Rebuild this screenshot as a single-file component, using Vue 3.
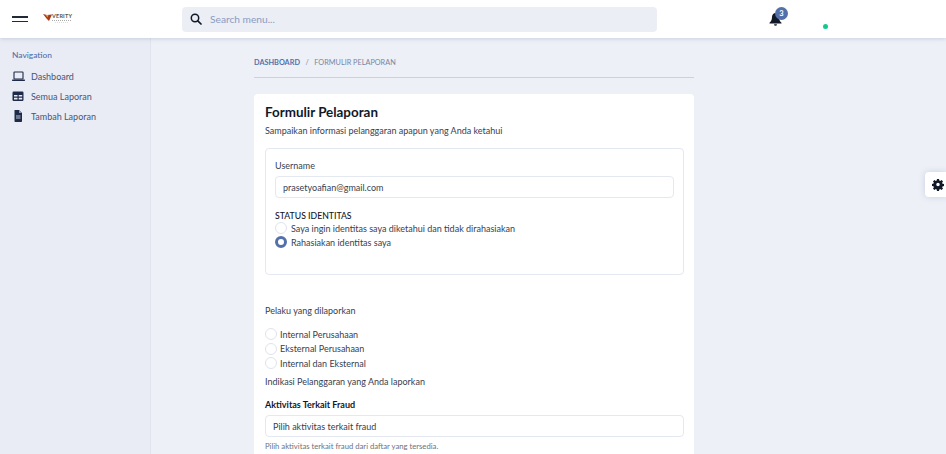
<script setup>
const nav = [
  { label: 'Dashboard', icon: 'laptop' },
  { label: 'Semua Laporan', icon: 'table' },
  { label: 'Tambah Laporan', icon: 'file' },
]
const identity = [
  { label: 'Saya ingin identitas saya diketahui dan tidak dirahasiakan', checked: false },
  { label: 'Rahasiakan identitas saya', checked: true },
]
const actors = ['Internal Perusahaan', 'Eksternal Perusahaan', 'Internal dan Eksternal']
</script>

<template>
  <div class="app">
    <header class="topbar">
      <div class="brand">
        <div class="burger"><span></span><span></span></div>
        <div class="logo">
          <svg width="9" height="8" viewBox="0 0 9 8"><path d="M0 1l4 1 5-.5L6 8 3.500 5.500z" fill="#a83a18" /><path d="M2.500 2h3L4.500 4.500z" fill="#e8a21c" /></svg>
          <div class="logo-text">
            <span class="logo-name">VERITY</span>
            <span class="logo-rule"></span>
            <span class="logo-rule faint"></span>
          </div>
        </div>
      </div>
      <div class="search">
        <svg class="search-icon" width="12" height="12" viewBox="0 0 12 12"><circle cx="5" cy="5" r="3.700" fill="none" stroke="#111827" stroke-width="1.500" /><path d="M7.800 7.800 11 11" stroke="#111827" stroke-width="1.700" stroke-linecap="round" /></svg>
        <span>Search menu...</span>
      </div>
      <div class="right">
        <div class="bell">
          <svg width="13" height="14" viewBox="0 0 13 14"><path d="M6.500 1C4.400 1 3 2.700 3 5c0 3-1 4.500-2.500 5.700v.8h12v-.8C11 9.500 10 8 10 5c0-2.300-1.400-4-3.500-4z" fill="#111827" /><path d="M5 12.300h3a1.500 1.500 0 0 1-3 0z" fill="#111827" /></svg>
          <span class="badge">3</span>
        </div>
        <span class="status"></span>
      </div>
    </header>
    <div class="body">
      <aside class="sidebar">
        <div class="nav-title">Navigation</div>
        <div v-for="item in nav" :key="item.label" class="nav-item">
          <svg v-if="item.icon === 'laptop'" width="13" height="11" viewBox="0 0 13 11"><rect x="2" y="1" width="9" height="7" rx=".6" fill="none" stroke="#1e2a4a" stroke-width="1.100" /><rect x="0" y="8.500" width="13" height="1.400" rx=".6" fill="#1e2a4a" /></svg>
          <svg v-else-if="item.icon === 'table'" width="13" height="11" viewBox="0 0 13 11"><rect x=".5" y=".5" width="11" height="9.500" rx="1.200" fill="#1e2a4a" /><path d="M2 4h3.500v1.600H2zM6.700 4h3.500v1.600H6.700zM2 6.800h3.500v1.600H2zM6.700 6.800h3.500v1.600H6.700z" fill="#e9ecf4" /></svg>
          <svg v-else width="13" height="12" viewBox="0 0 13 12"><path d="M2.500 0h4.500l3 3v8.200a.8.800 0 0 1-.8.800H3.300a.8.800 0 0 1-.8-.8z" fill="#1e2a4a" /><path d="M7 0v3h3z" fill="#8d97b5" /><path d="M4 6h4.500M4 8h4.500" stroke="#e9ecf4" stroke-width=".8" /></svg>
          <span>{{ item.label }}</span>
        </div>
      </aside>
      <main class="main">
        <div class="column">
          <nav class="crumbs">
            <span class="crumb-link">DASHBOARD</span>
            <span class="crumb-sep">/</span>
            <span class="crumb-current">FORMULIR PELAPORAN</span>
          </nav>
          <section class="card">
            <h1>Formulir Pelaporan</h1>
            <p class="lead">Sampaikan informasi pelanggaran apapun yang Anda ketahui</p>
            <div class="box">
              <label class="label">Username</label>
              <div class="input">prasetyoafian@gmail.com</div>
              <div class="status-title">STATUS IDENTITAS</div>
              <div v-for="opt in identity" :key="opt.label" class="radio-row">
                <span class="radio" :class="{ checked: opt.checked }"></span>
                <span>{{ opt.label }}</span>
              </div>
            </div>
            <p class="question">Pelaku yang dilaporkan</p>
            <div class="actors">
              <div v-for="a in actors" :key="a" class="radio-row actor">
                <span class="radio"></span>
                <span>{{ a }}</span>
              </div>
            </div>
            <p class="indication">Indikasi Pelanggaran yang Anda laporkan</p>
            <div class="field-title">Aktivitas Terkait Fraud</div>
            <div class="input select">Pilih aktivitas terkait fraud</div>
            <p class="hint">Pilih aktivitas terkait fraud dari daftar yang tersedia.</p>
          </section>
        </div>
      </main>
    </div>
    <button class="gear" aria-label="Pengaturan">
      <svg width="12" height="12" viewBox="0 0 24 24"><path fill="#111827" fill-rule="evenodd" d="M10 1h4l.6 3.200 1.900.8L19.200 3.200 22 6l-1.800 2.700.8 1.900 3 .6v4l-3 .6-.8 1.900L22 20l-2.800 2.800-2.700-1.800-1.900.8L14 25h-4l-.6-3.200-1.900-.8-2.700 1.800L2 20l1.800-2.700-.8-1.900-3-.6v-4l3-.6.800-1.900L2 6l2.800-2.800L7.500 5l1.900-.8zM12 8.500a3.500 3.500 0 1 0 0 7 3.500 3.500 0 0 0 0-7z" transform="translate(0 -1)" /></svg>
    </button>
  </div>
</template>

<style>
html, body { margin: 0; }
</style>

<style scoped>
.app {
  position: relative;
  width: 946px;
  height: 454px;
  overflow: hidden;
  background: #edf0f7;
  font-family: "Lato", "Noto Sans", sans-serif;
  font-size: 9px;
  color: #1f2937;
  display: flex;
  flex-direction: column;
}
.topbar {
  height: 38px;
  flex: none;
  background: #fff;
  box-shadow: 0 1px 4px rgba(100, 116, 160, .25);
  display: flex;
  align-items: center;
  position: relative;
  z-index: 2;
}
.brand {
  width: 182px;
  padding-left: 12px;
  box-sizing: border-box;
  display: flex;
  align-items: center;
  gap: 15px;
}
.burger { width: 16px; display: flex; flex-direction: column; gap: 3px; }
.burger span { height: 1.500px; background: #1f2937; display: block; }
.logo { display: flex; align-items: flex-start; margin-top: -2px; }
.logo-text { display: flex; flex-direction: column; gap: 1px; }
.logo-name { font-size: 5.500px; line-height: 6px; font-weight: 700; color: #555; letter-spacing: .2px; }
.logo-rule { height: 1px; width: 19px; border-top: 1px dotted #aaa; box-sizing: border-box; }
.logo-rule.faint { width: 13px; margin-left: 3px; border-top-color: #ddd; }
.search {
  width: 475px;
  height: 25px;
  border-radius: 4px;
  background: #ebeef4;
  display: flex;
  align-items: center;
  padding-left: 8px;
  box-sizing: border-box;
  gap: 8px;
  color: #8a9bc4;
  font-size: 10.200px;
}
.search-icon { flex: none; }
.right { position: relative; flex: 1; height: 38px; }
.bell { position: absolute; left: 112px; top: 12px; width: 13px; height: 14px; }
.bell svg { display: block; }
.badge {
  position: absolute;
  left: 6px;
  top: -5px;
  width: 13px;
  height: 13px;
  border-radius: 50%;
  background: #5470ab;
  color: #fff;
  font-size: 7.500px;
  font-weight: 700;
  line-height: 13px;
  text-align: center;
}
.status {
  position: absolute;
  left: 166px;
  top: 24px;
  width: 5px;
  height: 5px;
  border-radius: 50%;
  background: #10c98f;
}
.body { flex: 1; display: flex; min-height: 0; }
.sidebar {
  width: 151px;
  flex: none;
  box-sizing: border-box;
  background: #e9ecf4;
  border-right: 1px solid #e0e4ee;
  padding: 12px 12px 0;
}
.nav-title { color: #5470ab; font-size: 8.400px; font-weight: 500; line-height: 11px; margin-bottom: 5px; }
.nav-item {
  height: 20px;
  display: flex;
  align-items: center;
  gap: 6px;
  color: #46547a;
}
.nav-item svg { flex: none; }
.main { flex: 1; padding-left: 103px; min-width: 0; }
.column { width: 440px; }
.crumbs {
  height: 40px;
  box-sizing: border-box;
  border-bottom: 1px solid #ccd2dd;
  display: flex;
  align-items: flex-start;
  padding-top: 20px;
  font-size: 7.300px;
  line-height: 10px;
  gap: 5.500px;
  margin-bottom: 16px;
}
.crumb-link { color: #5470ab; font-weight: 700; }
.crumb-sep, .crumb-current { color: #7a869f; }
.card {
  background: #fff;
  border-radius: 4px;
  padding: 10px 10px 0 11px;
  height: 400px;
}
h1 { margin: 0; font-size: 13.400px; font-weight: 700; color: #111827; line-height: 16px; }
.lead { margin: 3px 0 0; line-height: 16px; color: #374151; }
.box {
  margin-top: 9px;
  height: 127px;
  box-sizing: border-box;
  border: 1px solid #e4e8f0;
  border-radius: 4px;
  padding: 10px 9px 0;
}
.label { display: block; line-height: 14px; color: #374151; }
.input {
  margin-top: 3px;
  height: 22px;
  box-sizing: border-box;
  border: 1px solid #e4e8f0;
  border-radius: 4px;
  padding-left: 7px;
  display: flex;
  align-items: center;
  color: #374151;
}
.status-title { margin-top: 12px; color: #111827; font-weight: 500; font-size: 8.700px; line-height: 11px; }
.radio-row { height: 14px; display: flex; align-items: center; gap: 4px; color: #374151; }
.radio {
  width: 12px;
  height: 12px;
  flex: none;
  box-sizing: border-box;
  border-radius: 50%;
  border: 1px solid #dfe3ec;
  background: #fff;
}
.radio.checked { border: 3px solid #5470ab; }
.question { margin: 29px 0 0; line-height: 14px; color: #374151; }
.actors { margin-top: 9px; }
.actor { gap: 3px; height: 14.500px; }
.indication { margin: 4px 0 0; line-height: 14px; color: #374151; }
.field-title { margin-top: 9px; line-height: 14px; color: #111827; font-weight: 700; }
.select { margin-top: 3px; padding-left: 7px; padding-top: 1px; }
.hint { margin: 4px 0 0; font-size: 7.700px; line-height: 10px; color: #6b7280; }
.gear {
  position: absolute;
  right: 0;
  top: 172px;
  width: 21px;
  height: 25px;
  padding: 1px 0 0 5px;
  border: 0;
  border-radius: 4px 0 0 4px;
  background: #fff;
  box-shadow: 0 0 6px rgba(100, 116, 160, .25);
  display: flex;
  align-items: center;
  justify-content: center;
}
</style>
